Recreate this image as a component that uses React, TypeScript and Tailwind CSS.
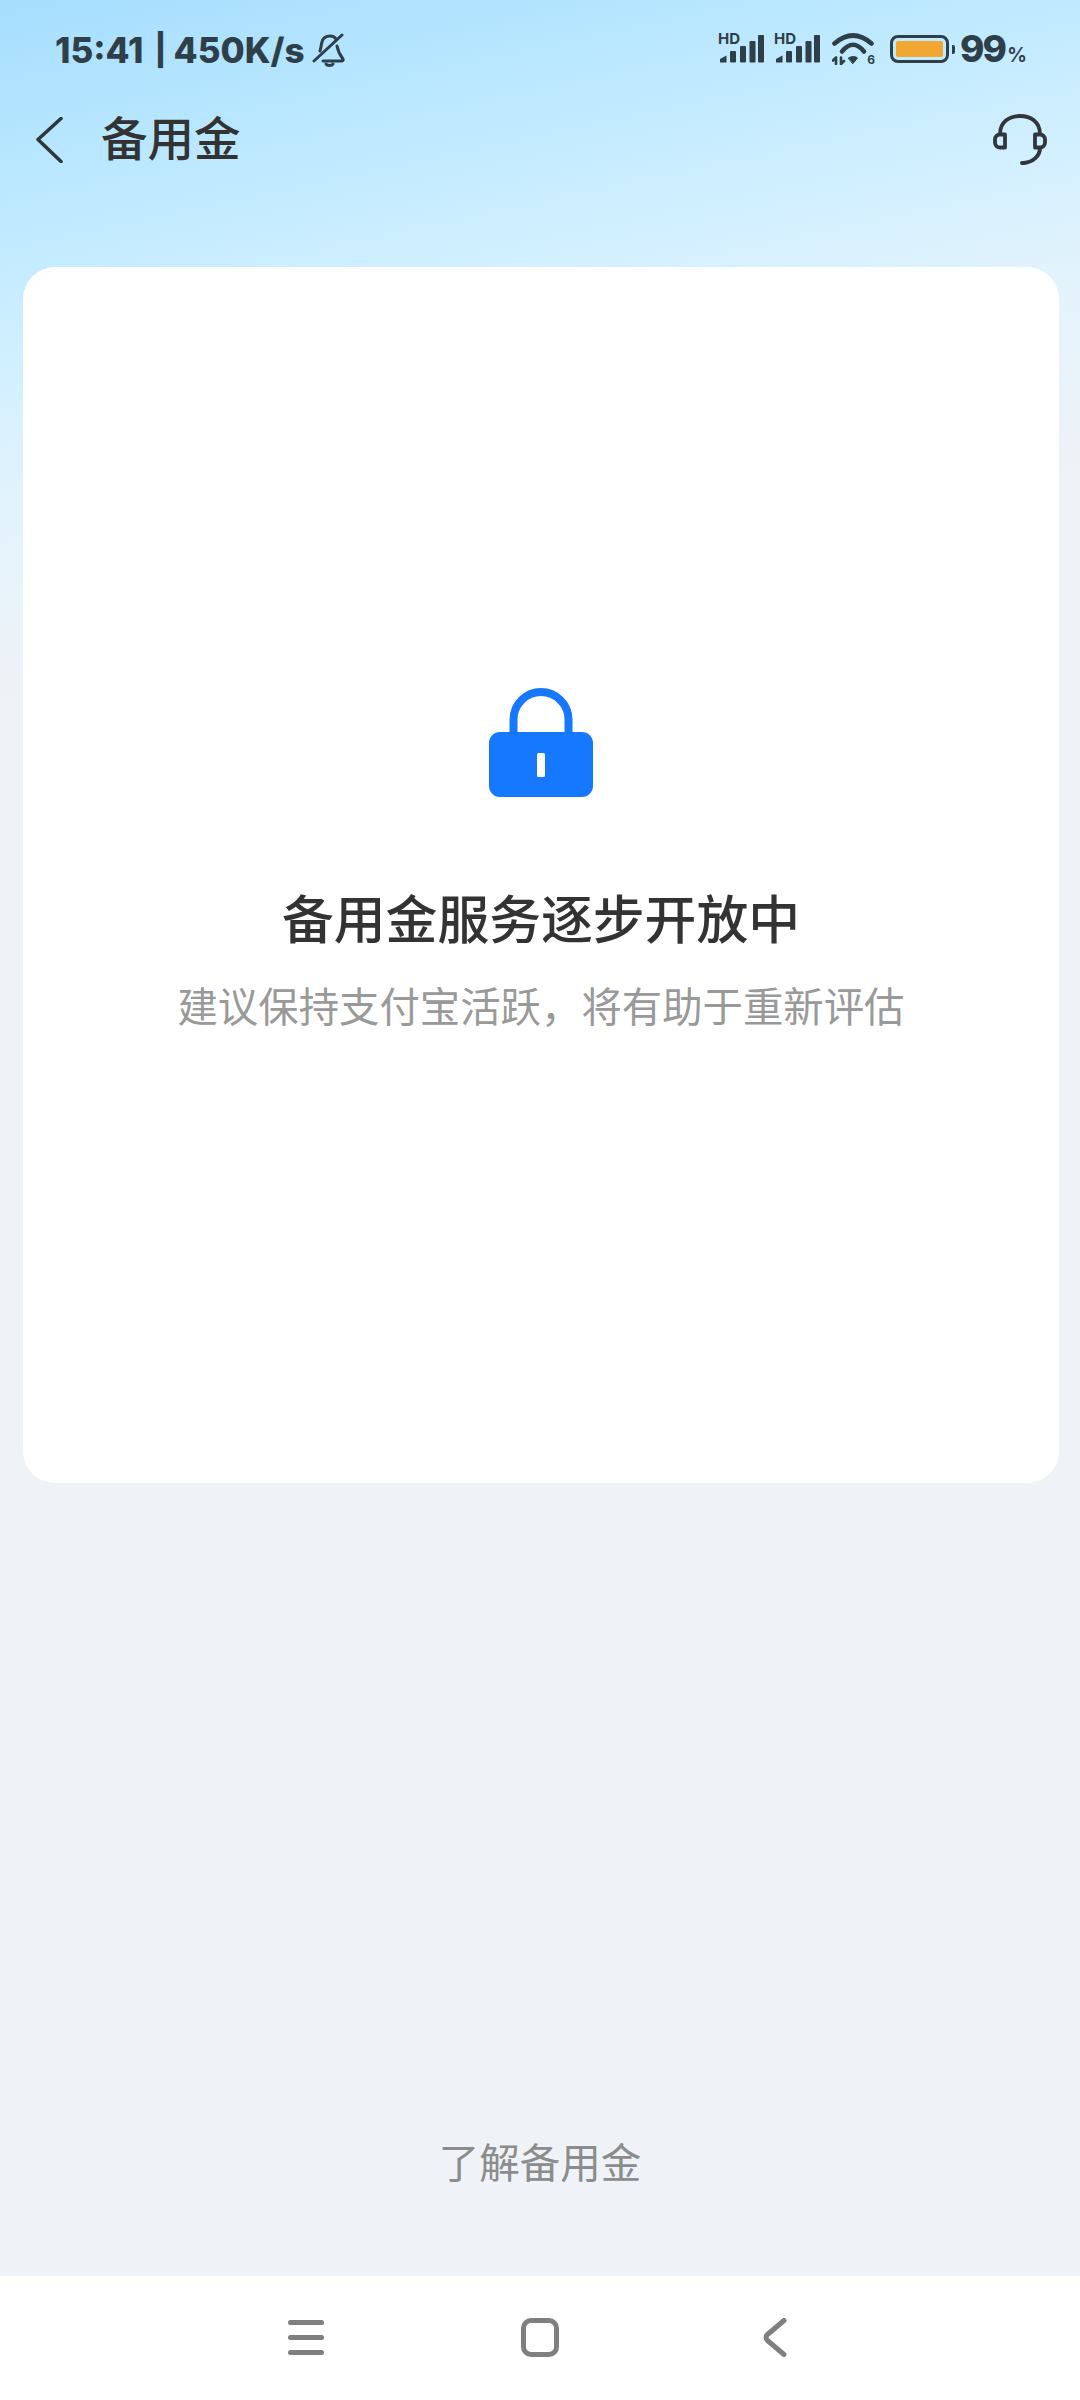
import React from "react";

const cjk = "font-['Noto_Sans_CJK_SC','Noto_Sans',sans-serif]";

function Signal() {
  return (
    <div className="relative w-[46px] h-[30px]">
      <span className="absolute left-0 top-[-2px] text-[15px] leading-[14px] font-bold text-[#2f3f4a] font-['Inter',sans-serif]">HD</span>
      <svg width="46" height="30" viewBox="0 0 46 30" className="absolute left-0 top-0" fill="#2f3f4a">
        <path d="M2 28.500v-3.500l6.500-3.500v7z" />
        <rect x="12" y="17" width="6" height="11.500" rx="1" />
        <rect x="22" y="12" width="6" height="16.500" rx="1" />
        <rect x="31.500" y="7" width="6" height="21.500" rx="1" />
        <rect x="40" y="1" width="6" height="27.500" rx="1" />
      </svg>
    </div>
  );
}

function StatusBar() {
  return (
    <div className="h-[100px] pl-[55px] pr-[53px] flex items-start justify-between text-[#2f3f4a]">
      <div className="flex items-center h-[28px] mt-[36px] font-['Inter',sans-serif] font-extrabold whitespace-nowrap">
        <span className="text-[35px] leading-[28px]">15:41</span>
        <span className="ml-[11px] text-[31px] leading-[28px]">|</span>
        <span className="ml-[7px] text-[35px] leading-[28px]">450K/s</span>
        <svg width="36" height="36" viewBox="0 0 36 36" fill="none" stroke="#2f3f4a" strokeWidth="3" strokeLinecap="round" strokeLinejoin="round" className="ml-[6px] mt-[2px]">
          <path d="M3 28L31 2" />
          <path d="M9 18c1-3 1-6 2-9 1-4 4-6 8-6 3 0 5 1 6 3" />
          <path d="M26 13c1 5 2 8 6 13 .7 1 0 2-1 2H12" />
          <path d="M15 31c1 2 6 2 7 0" />
        </svg>
      </div>
      <div className="flex items-center mt-[34px] h-[30px]">
        <Signal />
        <div className="w-[10px]" />
        <Signal />
        <div className="relative ml-[12px] w-[44px] h-[32px]">
          <svg width="44" height="32" viewBox="0 0 44 32" fill="none" stroke="#2f3f4a" strokeWidth="4.6" strokeLinecap="round" className="absolute left-0 top-0">
            <path d="M2.500 10.500Q21 -5.500 39.500 10.500" />
            <path d="M10 18.500Q21 5 32 18.500" />
            <path d="M16.500 25c3-2 7-2 9 0L21 30.500z" fill="#2f3f4a" stroke="#2f3f4a" strokeWidth="1" strokeLinejoin="round" />
            <path d="M4 24.500v6.500M1 27.500L4 24.500M9 31v-6.500M12 28L9 31" strokeWidth="2.600" />
          </svg>
          <span className="absolute right-[1px] bottom-0 text-[12px] leading-[11px] font-bold font-['Inter',sans-serif]">6</span>
        </div>
        <div className="ml-[14px] w-[59px] h-[28px] rounded-[8px] border-[3px] border-[#2f3f4a] p-[3px] flex">
          <div className="w-[47px] h-[16px] rounded-[2px] bg-[#f2a733]" />
        </div>
        <div className="ml-[3px] w-[3px] h-[9px] rounded-r-[2px] bg-[#2f3f4a]" />
        <span className="ml-[5px] text-[37px] leading-[30px] tracking-[-2px] font-extrabold font-['Inter',sans-serif]">99</span>
        <span className="ml-[2px] text-[20px] leading-[20px] mt-[12px] font-semibold font-['Inter',sans-serif]">%</span>
      </div>
    </div>
  );
}

function Header() {
  return (
    <div className="h-[80px] pl-[36px] pr-[33px] flex items-center justify-between">
      <div className="flex items-center">
        <svg width="28" height="46" viewBox="0 0 28 46" fill="none" stroke="#30363b" strokeWidth="3.6" strokeLinecap="round" strokeLinejoin="round">
          <path d="M25 1.500L2 22.500L25 44.500" />
        </svg>
        <span className={`ml-[37px] mb-[8px] text-[46.500px] leading-[60px] font-medium text-[#333333] ${cjk}`}>备用金</span>
      </div>
      <svg width="54" height="52" viewBox="0 0 54 52" fill="none" stroke="#30363b" strokeWidth="3.8" strokeLinecap="round" strokeLinejoin="round">
        <path d="M7 20C7 8 16 2 27 2s20 6 20 18" />
        <path d="M12 20.500H7a5 5 0 0 0-5 5v3a5 5 0 0 0 5 5h5z" />
        <path d="M42 20.500h5a5 5 0 0 1 5 5v3a5 5 0 0 1-5 5h-5z" />
        <path d="M47 34c0 8-7 14-16 15h-2" strokeWidth="4" />
      </svg>
    </div>
  );
}

function Lock() {
  return (
    <svg width="104" height="109" viewBox="0 0 104 109" fill="none">
      <path d="M24.500 50V31.500a27.500 27.500 0 0 1 55 0V50" stroke="#1677ff" strokeWidth="8" />
      <rect x="0" y="44" width="104" height="65" rx="11" fill="#1677ff" />
      <rect x="48" y="65" width="8" height="24" rx="1.500" fill="#ffffff" />
    </svg>
  );
}

function NavBar() {
  return (
    <div className="h-[124px] bg-white flex items-start">
      <div className="w-full flex items-center mt-[42px] h-[39px] pl-[288px]">
        <div className="flex flex-col gap-[10px] w-[36px]">
          <div className="h-[5px] rounded-full bg-[#7f7f7f]" />
          <div className="h-[5px] rounded-full bg-[#7f7f7f]" />
          <div className="h-[5px] rounded-full bg-[#7f7f7f]" />
        </div>
        <div className="ml-[197px] w-[38px] h-[39px] rounded-[10px] border-[5px] border-[#7f7f7f]" />
        <svg width="24" height="39" viewBox="0 0 24 39" fill="none" stroke="#7f7f7f" strokeWidth="5" strokeLinecap="round" strokeLinejoin="round" className="ml-[204px]">
          <path d="M21 2.500L4.500 16.500c-2 1.700-2 4.300 0 6L21 36.500" />
        </svg>
      </div>
    </div>
  );
}

export default function App() {
  return (
    <div className="w-[1080px] h-[2400px] flex flex-col bg-[linear-gradient(168deg,#a6defe_0px,#b9e7ff_170px,#cfefff_340px,#e2f3fc_490px,#eff2f7_690px)] overflow-hidden">
      <StatusBar />
      <Header />
      <div className="ml-[23px] mr-[21px] mt-[87px] h-[1216px] rounded-[32px] bg-white flex flex-col items-center pt-[421px]">
        <Lock />
        <div className={`mt-[84px] text-[51.800px] leading-[72px] font-medium text-[#333333] ${cjk}`}>备用金服务逐步开放中</div>
        <div className={`mt-[24px] text-[40.400px] leading-[56px] text-[#999999] whitespace-nowrap ${cjk}`}>建议保持支付宝活跃，将有助于重新评估</div>
      </div>
      <div className="flex-1 flex flex-col justify-end items-center pb-[87px]">
        <span className={`text-[40.500px] leading-[56px] text-[#8c8c8c] ${cjk}`}>了解备用金</span>
      </div>
      <NavBar />
    </div>
  );
}
